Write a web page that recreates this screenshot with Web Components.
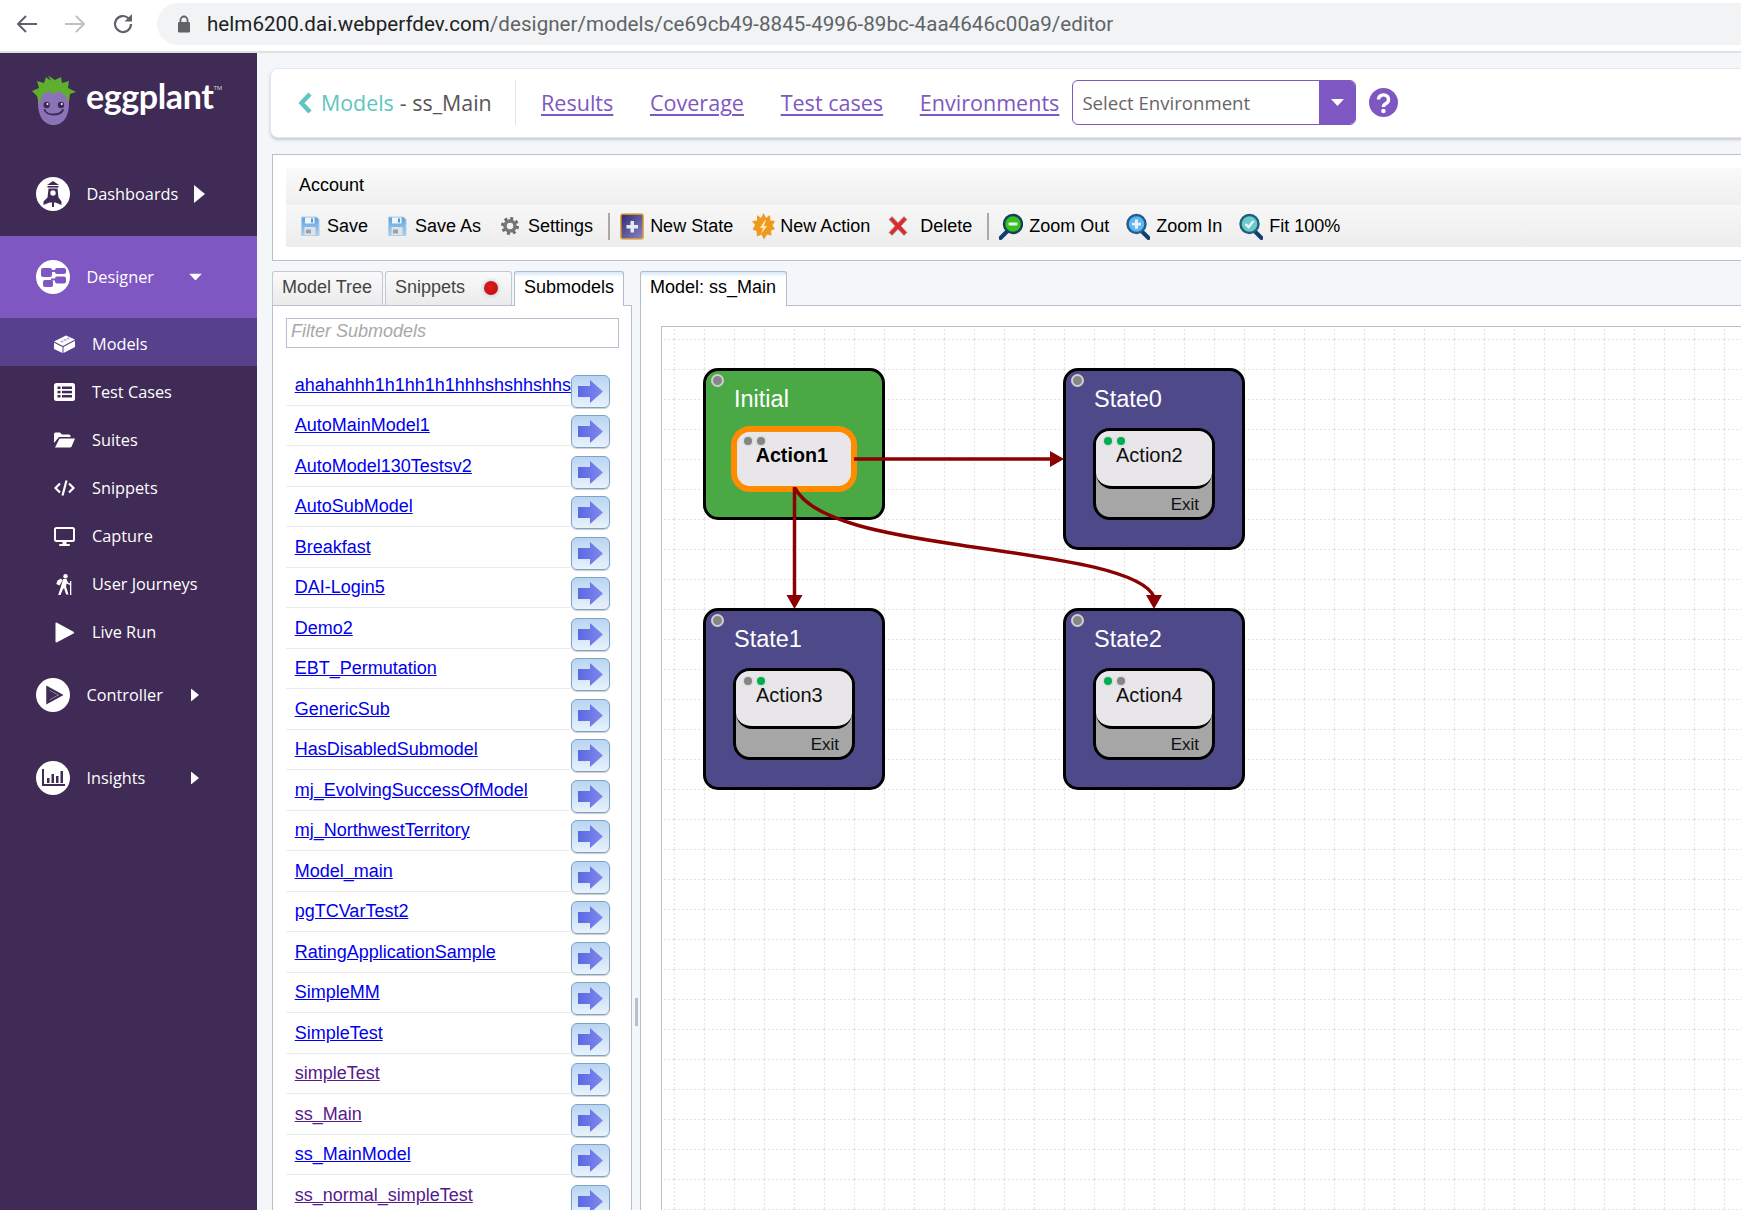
<!DOCTYPE html>
<html>
<head>
<meta charset="utf-8">
<title>eggplant designer</title>
<style>
html, body { margin: 0; padding: 0; background: #f3f7fa; overflow: hidden; }
</style>
</head>
<body>
<app-shell>
  <browser-bar slot="bar" url="helm6200.dai.webperfdev.com" path="/designer/models/ce69cb49-8845-4996-89bc-4aa4646c00a9/editor"></browser-bar>
  <side-nav slot="nav">
    <nav-item icon="dashboards" caret="big">Dashboards</nav-item>
    <nav-item icon="designer" caret="down" active>Designer</nav-item>
    <nav-item icon="models" sub active>Models</nav-item>
    <nav-item icon="testcases" sub>Test Cases</nav-item>
    <nav-item icon="suites" sub>Suites</nav-item>
    <nav-item icon="snippets" sub>Snippets</nav-item>
    <nav-item icon="capture" sub>Capture</nav-item>
    <nav-item icon="journeys" sub>User Journeys</nav-item>
    <nav-item icon="liverun" sub>Live Run</nav-item>
    <nav-item icon="controller" caret="right">Controller</nav-item>
    <nav-item icon="insights" caret="right">Insights</nav-item>
  </side-nav>
  <top-card></top-card>
  <tool-panel title-text="Account">
    <tool-btn icon="save" style="--gap:7px;--after:19px;--w:20px">Save</tool-btn>
    <tool-btn icon="save" style="--gap:8px;--after:20px;--w:20px">Save As</tool-btn>
    <tool-btn icon="gear" style="--gap:9px;--after:15px;--w:18px">Settings</tool-btn>
    <tool-sep style="--after:10px"></tool-sep>
    <tool-btn icon="newstate" style="--gap:6px;--after:19px;--w:24px">New State</tool-btn>
    <tool-btn icon="newaction" style="--gap:5px;--after:16px;--w:23px">New Action</tool-btn>
    <tool-btn icon="delete" style="--gap:10px;--after:15px;--w:24px">Delete</tool-btn>
    <tool-sep style="--after:10px"></tool-sep>
    <tool-btn icon="zoomout" style="--gap:6px;--after:17px;--w:24px">Zoom Out</tool-btn>
    <tool-btn icon="zoomin" style="--gap:6px;--after:17px;--w:24px">Zoom In</tool-btn>
    <tool-btn icon="fit" style="--gap:6px;--after:0;--w:24px">Fit 100%</tool-btn>
  </tool-panel>
  <editor-panes>
    <tab-item slot="lefttabs" style="width:111px">Model Tree</tab-item>
    <tab-item slot="lefttabs" style="width:127px" dot>Snippets</tab-item>
    <tab-item slot="lefttabs" style="width:110px" active>Submodels</tab-item>
    <tab-item slot="righttabs" style="width:147px" active>Model: ss_Main</tab-item>
    <sub-list slot="left"></sub-list>
    <model-canvas slot="right">
      <model-state style="left:41px;top:41px" label="Initial" kind="initial" action="Action1" dots="off off" selected></model-state>
      <model-state style="left:401px;top:41px" label="State0" action="Action2" dots="on on" exit="Exit"></model-state>
      <model-state style="left:41px;top:281px" label="State1" action="Action3" dots="off on" exit="Exit"></model-state>
      <model-state style="left:401px;top:281px" label="State2" action="Action4" dots="on off" exit="Exit"></model-state>
    </model-canvas>
  </editor-panes>
</app-shell>

<script>
var DARK = "#402b57";
var PURPLE = "#7e57c2";

var navIcons = {
  dashboards: `<svg width="34" height="34" viewBox="0 0 34 34"><circle cx="17" cy="17" r="17" fill="#fff"/>
    <path d="M17 4l6 4H11z" fill="${DARK}"/><rect x="11.5" y="9" width="11" height="1.6" fill="${DARK}"/>
    <path d="M12.5 11.5h9l1 9 3 4v3.5l-6-2.5h-6L7.500 28v-3.500l4-4z" fill="${DARK}"/>
    <circle cx="17" cy="16" r="2.700" fill="#fff"/><rect x="16" y="23" width="2" height="7" fill="${DARK}"/></svg>`,
  designer: `<svg width="34" height="34" viewBox="0 0 34 34"><circle cx="17" cy="17" r="17" fill="#fff"/>
    <g fill="${PURPLE}"><rect x="5" y="8" width="11" height="9" rx="2"/><rect x="19" y="8" width="11" height="6" rx="2"/>
    <rect x="19" y="16.500" width="11" height="7" rx="2"/><rect x="7" y="20" width="10" height="7" rx="2"/>
    <rect x="15" y="10" width="5" height="2"/><rect x="15" y="18.500" width="5" height="2"/></g></svg>`,
  models: `<svg width="21" height="18" viewBox="0 0 21 18"><g fill="#fff"><path d="M0 6.500 12 .5l9 4L9 11z"/><path d="M0 7.800l8.500 4.200V18L0 14z"/><path d="M9.500 12 21 5.800V12L9.500 18z"/></g>
    <g fill="#b9afc9"><ellipse cx="8" cy="6.500" rx="1.600" ry="1"/><ellipse cx="11" cy="5" rx="1.600" ry="1"/><ellipse cx="14" cy="3.600" rx="1.600" ry="1"/></g></svg>`,
  testcases: `<svg width="21" height="18" viewBox="0 0 21 18"><rect width="21" height="18" rx="2.500" fill="#fff"/>
    <g fill="${DARK}"><rect x="3.500" y="3.500" width="3" height="2.500"/><rect x="8" y="3.500" width="10" height="2.500"/><rect x="3.500" y="7.800" width="3" height="2.500"/><rect x="8" y="7.800" width="10" height="2.500"/><rect x="3.500" y="12" width="3" height="2.500"/><rect x="8" y="12" width="10" height="2.500"/></g></svg>`,
  suites: `<svg width="21" height="16" viewBox="0 0 21 16"><path d="M0 2a1.500 1.500 0 0 1 1.500-1.500h4.500l2 2h7a1.500 1.500 0 0 1 1.500 1.500v1H5L0 11z" fill="#fff"/><path d="M5.500 6.500H21l-3.500 8.300a1.500 1.500 0 0 1-1.300.7H1z" fill="#fff"/></svg>`,
  snippets: `<svg width="21" height="16" viewBox="0 0 21 16" fill="none" stroke="#fff" stroke-width="2.200"><path d="M6 3.500 1.500 8 6 12.500M15 3.500 19.500 8 15 12.500"/><path d="M12.500 .5 8.500 15.500"/></svg>`,
  capture: `<svg width="21" height="19" viewBox="0 0 21 19"><rect x="1" y="1" width="19" height="13" rx="1.500" fill="none" stroke="#fff" stroke-width="2"/><rect x="8.500" y="14" width="4" height="3" fill="#fff"/><rect x="5" y="17" width="11" height="2" rx="1" fill="#fff"/></svg>`,
  journeys: `<svg width="21" height="21" viewBox="0 0 21 21"><g fill="#fff"><circle cx="11.500" cy="2.200" r="2.200"/>
    <path d="M3.500 6.500 7 4.500l1.500 2-3 5-3.200-1.500z"/><path d="M9 5h3.500l1.500 3.500 2.500 1.200-.6 1.300-3.400-1.400-.5 3 2.500 8h-2.400L10 14l-1.500 2-2 5H4.200l2.400-7.200z"/><rect x="16" y="7" width="1.300" height="14"/></g></svg>`,
  liverun: `<svg width="21" height="21" viewBox="0 0 21 21"><path d="M1.500 1.500a1 1 0 0 1 1.500-.8L19.500 9.700a1 1 0 0 1 0 1.700L3 20.300a1 1 0 0 1-1.500-.8z" fill="#fff"/></svg>`,
  controller: `<svg width="34" height="34" viewBox="0 0 34 34"><circle cx="17" cy="17" r="17" fill="#fff"/><path d="M11.500 9.500 25 17l-13.500 7.500z" fill="none" stroke="${DARK}" stroke-width="2.500"/><path d="M11 9v16l2.500-1.500V10.500z" fill="${DARK}"/><path d="M13 12v10l9-5z" fill="${DARK}"/></svg>`,
  insights: `<svg width="34" height="34" viewBox="0 0 34 34"><circle cx="17" cy="17" r="17" fill="#fff"/><g fill="${DARK}"><path d="M6 8h2v15h21v2H6z"/><rect x="11" y="17" width="2.500" height="5"/><rect x="15.500" y="13" width="2.500" height="9"/><rect x="20" y="15" width="2.500" height="7"/><rect x="24.500" y="10" width="2.500" height="12"/></g></svg>`
};

var toolIcons = {
  save: `<svg width="20" height="24" viewBox="0 0 20 24"><defs><linearGradient id="f" x1="0" x2="0" y1="0" y2="1"><stop offset="0" stop-color="#5aa3e2"/><stop offset="1" stop-color="#a8cfee"/></linearGradient></defs>
    <path d="M1.500 3h15l2.500 2.500V21.500H1.500z" fill="url(#f)" stroke="#b6cfe4"/><rect x="5" y="3.500" width="9.500" height="6" fill="#eef5fb"/><rect x="11" y="4.500" width="2" height="4" fill="#5a94c8"/><rect x="4.500" y="13" width="11" height="8" fill="#dfe3e8"/><rect x="6" y="15.500" width="5" height="4" fill="#9aa3ad"/></svg>`,
  gear: `<svg width="18" height="24" viewBox="0 0 18 24"><g transform="translate(9 12)" fill="none"><circle r="5" stroke="#777" stroke-width="3.600"/><circle r="7.500" stroke="#6e6e6e" stroke-width="3" stroke-dasharray="3 2.890"/></g></svg>`,
  newstate: `<svg width="24" height="27" viewBox="0 0 24 27"><defs><linearGradient id="p" x1="0" x2="1" y1="0" y2="1"><stop offset="0" stop-color="#2f2a72"/><stop offset="1" stop-color="#8a87c4"/></linearGradient></defs>
    <rect x=".8" y="1" width="22.400" height="25" rx="2" fill="url(#p)" stroke="#eba83a" stroke-width="1.500"/><path d="M10.500 8h3.500v4h4v3.500h-4v4h-3.500v-4h-4V12h4z" fill="#e9e9f5"/></svg>`,
  newaction: `<svg width="23" height="27" viewBox="0 0 23 27"><path d="M11.500 0l2.500 5 4-3 .5 5.500 4.500.5-2.500 4.500 2.500 3.500-4 1.500.5 5-4.500-1-3 5-2.500-5-4.500 2-.5-5.500-4-1.500 2.500-4.500L0 8l5-.5L5 2l4 3z" fill="#ee9a1e"/><path d="M13 7l-5 8h3l-2 6 6-8h-3l2-6z" fill="#ffe9b0"/></svg>`,
  delete: `<svg width="24" height="24" viewBox="0 0 24 24"><path d="M3 5.500 6 2.500l6 6.200 6-6.200 3 3-6 6.500 6 6.500-3 3-6-6.200-6 6.200-3-3 6-6.500z" fill="#dd2a2a" stroke="#a9a9a9" stroke-width=".8"/></svg>`,
  zoomout: `<svg width="24" height="27" viewBox="0 0 24 27"><path d="M7.500 19 1.500 25" stroke="#123f6d" stroke-width="4" stroke-linecap="round"/><circle cx="14" cy="11" r="9" fill="#35c21a" stroke="#143f5f" stroke-width="2.400"/><rect x="9.500" y="9.500" width="9" height="3" rx="1" fill="#eef"/></svg>`,
  zoomin: `<svg width="24" height="27" viewBox="0 0 24 27"><path d="M16.500 19 22.500 25" stroke="#123f6d" stroke-width="4" stroke-linecap="round"/><circle cx="10.500" cy="11" r="9" fill="#62b5ec" stroke="#1d5f91" stroke-width="2.400"/><path d="M9 6.500h3V9.800h3v2.700h-3v3.300H9v-3.300H6V9.800h3z" fill="#e6f2fb"/></svg>`,
  fit: `<svg width="24" height="27" viewBox="0 0 24 27"><path d="M16.500 19 22.500 25" stroke="#123f6d" stroke-width="4" stroke-linecap="round"/><circle cx="10.500" cy="11" r="9" fill="#6ccbc8" stroke="#1d5f7f" stroke-width="2.400"/><path d="M6.500 11l3 3 5-6" fill="none" stroke="#eef8f8" stroke-width="2.200"/></svg>`
};

class AppShell extends HTMLElement {
  constructor() {
    super();
    this.attachShadow({ mode: "open" });
    this.shadowRoot.innerHTML = `
    <style>
      :host { display: grid; grid-template-columns: 257px 1fr; grid-template-rows: 53px 1157px; width: 1741px; height: 1210px; overflow: hidden; background: #f3f7fa; }
      ::slotted([slot=bar]) { grid-column: 1 / 3; }
      main { min-width: 0; overflow: hidden; padding: 15px 0 0 13px; display: flex; flex-direction: column; }
    </style>
    <slot name="bar"></slot>
    <slot name="nav"></slot>
    <main><slot></slot></main>`;
  }
}
customElements.define("app-shell", AppShell);

class BrowserBar extends HTMLElement {
  constructor() {
    super();
    this.attachShadow({ mode: "open" });
  }
  connectedCallback() {
    this.shadowRoot.innerHTML = `
    <style>
      :host { display: flex; align-items: flex-start; height: 53px; box-sizing: border-box; background: #fff; border-bottom: 2px solid #dfe1e3; font-family: Roboto, "Liberation Sans", sans-serif; }
      .nav { display: flex; align-items: center; height: 48px; padding-left: 15px; gap: 24px; }
      .nav svg { display: block; }
      .pill { margin: 3px -40px 0 21.500px; flex: 1; height: 42px; border-radius: 21px; background: #f1f3f4; display: flex; align-items: center; padding-left: 20px; }
      .url { margin-left: 16.500px; font-size: 20.550px; letter-spacing: .05px; color: #202124; white-space: nowrap; }
      .url span { color: #5f6368; }
    </style>
    <div class="nav">
      <svg width="24" height="24" viewBox="0 0 24 24" fill="none" stroke="#5f6368" stroke-width="2"><path d="M22 12H3M11 4l-8 8 8 8"/></svg>
      <svg width="24" height="24" viewBox="0 0 24 24" fill="none" stroke="#bdc1c6" stroke-width="2"><path d="M2 12h19M13 4l8 8-8 8"/></svg>
      <svg width="24" height="24" viewBox="0 0 24 24" fill="none" stroke="#5f6368" stroke-width="2.200"><path d="M20 12a8 8 0 1 1-2.500-5.800"/><path d="M21 2v7.500h-7.500z" fill="#5f6368" stroke="none"/></svg>
    </div>
    <div class="pill">
      <svg width="14" height="18" viewBox="0 0 14 18"><path d="M3.500 8V5a3.500 3.500 0 0 1 7 0v3" fill="none" stroke="#5f6368" stroke-width="1.800"/><rect x="1" y="7" width="12" height="10.500" rx="1.200" fill="#5f6368"/></svg>
      <div class="url">${this.getAttribute("url")}<span>${this.getAttribute("path")}</span></div>
    </div>`;
  }
}
customElements.define("browser-bar", BrowserBar);

var sideTemplate = document.createElement("template");
sideTemplate.innerHTML = `
<style>
  :host { display: block; background: ${DARK}; font-family: "Open Sans", sans-serif; overflow: hidden; }
  .logo { height: 100px; display: flex; align-items: flex-start; padding: 22px 0 0 31px; box-sizing: border-box; color: #fff; }
  .word { font: 700 34px/42px Lato, sans-serif; letter-spacing: -.4px; margin: 0 0 0 9px; }
  .tm { font: 6px/8px "Open Sans", sans-serif; margin-top: 9px; color: #ddd; }
</style>
<div class="logo">
  <svg width="46" height="50" viewBox="0 0 46 50">
    <path d="M22.500 14C33 14 38 20 38 28 38 40 33 50 22.500 50 12 50 7 40 7 28 7 20 12 14 22.500 14z" fill="#8c73b8"/>
    <path d="M1 16 8 13 6 6 13 8 15 2 20 6 17 .5 24 5 30 2 31 8 38 6 37 13 45 17 39 19 38 27 34 20 28 16 22 19 17 16 11 20 8 29 6 21z" fill="#5fae2e"/>
    <circle cx="15.700" cy="30" r="3.200" fill="#3a2a56"/><circle cx="30" cy="30" r="3.200" fill="#3a2a56"/><circle cx="16.500" cy="29" r="1" fill="#fff"/><circle cx="30.800" cy="29" r="1" fill="#fff"/>
    <path d="M13.500 35C16 41 29 41 32 35" fill="none" stroke="#3a2a56" stroke-width="1.800" stroke-linecap="round"/>
  </svg>
  <div class="word">eggplant</div><div class="tm">TM</div>
</div>
<slot></slot>`;
class SideNav extends HTMLElement {
  constructor() {
    super();
    this.attachShadow({ mode: "open" });
    this.shadowRoot.appendChild(sideTemplate.content.cloneNode(true));
  }
}
customElements.define("side-nav", SideNav);

class NavItem extends HTMLElement {
  constructor() {
    super();
    this.attachShadow({ mode: "open" });
  }
  connectedCallback() {
    var caret = this.getAttribute("caret");
    var c = "";
    if (caret == "big") c = `<svg class="caret" style="left:194px" width="11" height="18" viewBox="0 0 11 18"><path d="M0 0l11 9-11 9z" fill="#fff"/></svg>`;
    if (caret == "right") c = `<svg class="caret" style="left:191px" width="8" height="13" viewBox="0 0 8 13"><path d="M0 0l8 6.500L0 13z" fill="#fff"/></svg>`;
    if (caret == "down") c = `<svg class="caret" style="left:189px" width="13" height="7" viewBox="0 0 13 7"><path d="M0 0h13L6.500 7z" fill="#fff"/></svg>`;
    this.shadowRoot.innerHTML = `
    <style>
      :host { display: block; color: #fff; font-size: 16.300px; }
      .row { position: relative; display: flex; align-items: center; box-sizing: border-box; height: 83px; padding: 0 0 2px 36px; }
      .ic { width: 50.500px; flex: none; display: flex; }
      .ic svg { display: block; }
      .caret { position: absolute; top: calc(50% - 1px); transform: translateY(-50%); }
      :host([active]) .row { background: ${PURPLE}; height: 82px; padding-bottom: 0; }
      :host([active]) .caret { top: 50%; }
      :host([sub]) .row { height: 48px; padding: 4px 0 0 54px; background: none; }
      :host([sub]) .ic { width: 38px; }
      :host([sub][active]) .row { background: #57418c; height: 48px; }
    </style>
    <div class="row"><span class="ic">${navIcons[this.getAttribute("icon")]}</span><slot></slot>${c}</div>`;
  }
}
customElements.define("nav-item", NavItem);

var topTemplate = document.createElement("template");
topTemplate.innerHTML = `
<style>
  :host { display: flex; align-items: center; flex: none; height: 70px; width: calc(100% + 20px); box-sizing: border-box; background: #fff; border: 1px solid #e4e8ec; border-radius: 8px; box-shadow: 0 2px 3px rgba(0,0,0,.18); font: 21.400px "Open Sans", sans-serif; color: #555; padding: 0 0 1px 27px; }
  .crumb { display: flex; align-items: center; white-space: nowrap; width: 217px; }
  .crumb svg { margin-right: 9px; }
  .crumb b { font-weight: 400; color: #5fc5c0; margin-right: 6px; }
  .sep { width: 1px; height: 45px; background: #dfe3e6; flex: none; }
  .links { display: flex; gap: 36.700px; margin-left: 25px; font-size: 21.550px; }
  a { color: ${PURPLE}; text-decoration: underline; text-decoration-thickness: 2px; text-underline-offset: 3px; }
  .select { margin-left: 13px; width: 284px; height: 45px; box-sizing: border-box; border: 1.500px solid ${PURPLE}; border-radius: 6px; display: flex; align-items: center; justify-content: space-between; font-size: 18.600px; color: #666; padding-left: 9px; overflow: hidden; }
  .drop { width: 36px; height: 45px; background: ${PURPLE}; display: flex; align-items: center; justify-content: center; }
  .help { margin-left: 13px; }
</style>
<div class="crumb">
  <svg width="14" height="22" viewBox="0 0 14 22"><path d="M12 2 3.500 11 12 20" fill="none" stroke="#5fc5c0" stroke-width="4.500"/></svg>
  <b>Models</b>- ss_Main
</div>
<div class="sep"></div>
<div class="links"><a href="#">Results</a><a href="#">Coverage</a><a href="#">Test cases</a><a href="#">Environments</a></div>
<div class="select"><span>Select Environment</span><span class="drop"><svg width="13" height="7" viewBox="0 0 13 7"><path d="M0 0h13L6.500 7z" fill="#fff"/></svg></span></div>
<svg class="help" width="29" height="29" viewBox="0 0 29 29"><circle cx="14.500" cy="14.500" r="14.500" fill="${PURPLE}"/><path d="M9.500 11.500a5 4.600 0 1 1 7.500 4c-1.800 1-2.600 1.700-2.600 3.500" fill="none" stroke="#fff" stroke-width="3.400"/><circle cx="14.400" cy="23" r="2.200" fill="#fff"/></svg>`;
class TopCard extends HTMLElement {
  constructor() {
    super();
    this.attachShadow({ mode: "open" });
    this.shadowRoot.appendChild(topTemplate.content.cloneNode(true));
  }
}
customElements.define("top-card", TopCard);

class ToolPanel extends HTMLElement {
  constructor() {
    super();
    this.attachShadow({ mode: "open" });
  }
  connectedCallback() {
    this.shadowRoot.innerHTML = `
    <style>
      :host { display: block; flex: none; margin: 16px -20px 0 2px; height: 107px; box-sizing: border-box; border: 1px solid #b8bfce; background: #fff; padding: 13px 0 0 13px; font: 18px "Liberation Sans", sans-serif; color: #000; }
      .head { height: 37px; display: flex; align-items: center; padding: 0 0 2px 13px; box-sizing: border-box; background: linear-gradient(#fafafa, #efefef); }
      .bar { height: 42px; display: flex; align-items: center; padding-left: 14px; background: linear-gradient(#f7f7f7, #ededed); }
    </style>
    <div class="head">${this.getAttribute("title-text")}</div>
    <div class="bar"><slot></slot></div>`;
  }
}
customElements.define("tool-panel", ToolPanel);

class ToolBtn extends HTMLElement {
  constructor() {
    super();
    this.attachShadow({ mode: "open" });
  }
  connectedCallback() {
    this.shadowRoot.innerHTML = `
    <style>
      :host { display: flex; align-items: center; flex: none; margin-right: var(--after); white-space: nowrap; }
      .ic { width: var(--w); margin-right: var(--gap); display: flex; justify-content: center; }
      svg { display: block; }
    </style>
    <span class="ic">${toolIcons[this.getAttribute("icon")]}</span><slot></slot>`;
  }
}
customElements.define("tool-btn", ToolBtn);

class ToolSep extends HTMLElement {
  constructor() {
    super();
    this.attachShadow({ mode: "open" }).innerHTML = `
    <style>:host { display: block; flex: none; width: 2px; height: 27px; background: #a9a9a9; margin-right: var(--after); }</style>`;
  }
}
customElements.define("tool-sep", ToolSep);

class TabItem extends HTMLElement {
  constructor() {
    super();
    this.attachShadow({ mode: "open" });
  }
  connectedCallback() {
    var dot = this.hasAttribute("dot") ? `<i></i>` : "";
    this.shadowRoot.innerHTML = `
    <style>
      :host { display: flex; align-items: center; box-sizing: border-box; height: 34px; padding: 0 0 3px 9px; border: 1px solid #c2c8d4; border-bottom: 0; border-radius: 3px 3px 0 0; background: linear-gradient(#fafafa, #ebebeb); font: 18px "Liberation Sans", sans-serif; color: #444; position: relative; white-space: nowrap; }
      :host([active]) { background: linear-gradient(#d7e8f8, #fff 5px); color: #000; border-color: #b0bccd; height: 35px; padding-bottom: 4px; margin-bottom: -1px; z-index: 1; }
      i { position: absolute; right: 13px; top: 9px; width: 14px; height: 14px; border-radius: 50%; background: radial-gradient(circle at 45% 40%, #dd1c1c, #b30f12); box-shadow: 0 0 4px rgba(0,0,0,.25); }
    </style>
    <slot></slot>${dot}`;
  }
}
customElements.define("tab-item", TabItem);

class EditorPanes extends HTMLElement {
  constructor() {
    super();
    this.attachShadow({ mode: "open" });
    this.shadowRoot.innerHTML = `
    <style>
      :host { display: flex; flex: 1; min-height: 0; margin: 10px -20px -12px 2px; }
      .pane { display: flex; flex-direction: column; min-height: 0; }
      .left { width: 360px; flex: none; }
      .right { flex: 1; min-width: 0; }
      .tabs { display: flex; gap: 2px; flex: none; align-items: flex-start; height: 34px; }
      .body { flex: 1; min-height: 0; box-sizing: border-box; border: 1px solid #b8bfce; background: #fff; overflow: hidden; }
      .split { width: 8px; flex: none; position: relative; }
      .split::after { content: ""; position: absolute; left: 2.500px; top: 727px; width: 3px; height: 28px; background: #b8bfce; }
    </style>
    <div class="pane left"><div class="tabs"><slot name="lefttabs"></slot></div><div class="body"><slot name="left"></slot></div></div>
    <div class="split"></div>
    <div class="pane right"><div class="tabs"><slot name="righttabs"></slot></div><div class="body"><slot name="right"></slot></div></div>`;
  }
}
customElements.define("editor-panes", EditorPanes);

var subModels = [
  ["ahahahhh1h1hh1h1hhhshshhshhs"], ["AutoMainModel1"], ["AutoModel130Testsv2"], ["AutoSubModel"],
  ["Breakfast"], ["DAI-Login5"], ["Demo2"], ["EBT_Permutation"], ["GenericSub"], ["HasDisabledSubmodel"],
  ["mj_EvolvingSuccessOfModel"], ["mj_NorthwestTerritory"], ["Model_main"], ["pgTCVarTest2"],
  ["RatingApplicationSample"], ["SimpleMM"], ["SimpleTest"], ["simpleTest", true], ["ss_Main", true],
  ["ss_MainModel"], ["ss_normal_simpleTest", true]
];

class SubList extends HTMLElement {
  constructor() {
    super();
    this.attachShadow({ mode: "open" });
  }
  connectedCallback() {
    var rows = subModels.map(function (m) {
      return `<sub-row${m[1] ? " visited" : ""}>${m[0]}</sub-row>`;
    }).join("");
    this.shadowRoot.innerHTML = `
    <style>
      :host { display: block; padding: 12px 13px 0; font: 18px "Liberation Sans", sans-serif; }
      .filter { height: 30px; box-sizing: border-box; border: 1px solid #b8bfce; font-style: italic; color: #a8a8a8; padding-left: 4px; line-height: 24px; width: 333px; }
      .rows { margin-top: 17px; }
    </style>
    <div class="filter">Filter Submodels</div>
    <div class="rows">${rows}</div>`;
  }
}
customElements.define("sub-list", SubList);

class SubRow extends HTMLElement {
  constructor() {
    super();
    this.attachShadow({ mode: "open" });
    this.shadowRoot.innerHTML = `
    <style>
      :host { display: flex; align-items: flex-start; height: 40.500px; }
      .cell { width: 285px; height: 100%; box-sizing: border-box; flex: none; padding: 8.500px 0 0 8.700px; border-bottom: 1.500px solid #e9ebed; white-space: nowrap; line-height: 22px; }
      a { color: #0000ee; }
      :host([visited]) a { color: #551a8b; }
      .go { flex: none; display: block; width: 39px; height: 33px; box-sizing: border-box; margin-top: 9.700px; margin-bottom: -3px; border: 1px solid #7ea2c4; border-radius: 6px; background: linear-gradient(#b9d5f3, #e8f2fc); box-shadow: 0 1px 1px rgba(0,0,0,.2); position: relative; z-index: 1; }
      svg { display: block; }
    </style>
    <div class="cell"><a href="#"><slot></slot></a></div>
    <span class="go"><svg width="37" height="31" viewBox="0 0 37 31"><defs><linearGradient id="a" x1="0" x2="1"><stop offset="0" stop-color="#5a68e2"/><stop offset="1" stop-color="#8189ee"/></linearGradient></defs><path d="M6 10h12V4l13 11.500L18 27v-6H6z" fill="url(#a)"/></svg></span>`;
  }
}
customElements.define("sub-row", SubRow);

class ModelCanvas extends HTMLElement {
  constructor() {
    super();
    this.attachShadow({ mode: "open" });
    this.shadowRoot.innerHTML = `
    <style>
      :host { display: block; height: 100%; padding: 20px 0 0 20px; box-sizing: border-box; }
      .sheet { position: relative; height: 100%; box-sizing: border-box; border: 1px solid #b8bfce; border-right: 0; border-bottom: 0; background: #fff; overflow: hidden; }
      svg { position: absolute; left: 0; top: 0; width: 1200px; height: 900px; }
      .wires { z-index: 2; pointer-events: none; }
    </style>
    <div class="sheet">
      <svg>
        <defs><pattern id="grid" x="12" y="12" width="30" height="30" patternUnits="userSpaceOnUse">
          <path d="M0 .5H30M.5 0V30" stroke="#e4e4e4" stroke-width="1.200" stroke-dasharray="2 2" fill="none"/>
        </pattern></defs>
        <rect width="1200" height="900" fill="url(#grid)"/>
      </svg>
      <slot></slot>
      <svg class="wires">
        <g fill="none" stroke="#8b0000" stroke-width="3.500">
          <path d="M192 132H390"/>
          <path d="M132.500 160V270"/>
          <path d="M133 161C150 195 230 208 298 218C370 229 480 240 492 270"/>
        </g>
        <g fill="#8b0000">
          <path d="M402 132 388 124V140z"/>
          <path d="M132.500 282 124.500 268H140.500z"/>
          <path d="M492 282 484 268H500z"/>
        </g>
      </svg>
    </div>`;
  }
}
customElements.define("model-canvas", ModelCanvas);

class ModelState extends HTMLElement {
  constructor() {
    super();
    this.attachShadow({ mode: "open" });
  }
  connectedCallback() {
    var exit = this.getAttribute("exit");
    var dots = this.getAttribute("dots").split(" ").map(function (d) {
      return `<i class="${d}"></i>`;
    }).join("");
    this.shadowRoot.innerHTML = `
    <style>
      :host { position: absolute; display: block; width: 182px; height: 182px; box-sizing: border-box; border: 3px solid #000; border-radius: 15px; background: #4e4a8a; color: #fff; font-family: "Liberation Sans", sans-serif; padding: 14px 0 0 28px; }
      :host([kind=initial]) { background: #4aa845; height: 152px; }
      .pin { position: absolute; left: 4.500px; top: 3px; width: 13px; height: 13px; box-sizing: border-box; border-radius: 50%; background: #868686; border: 2px solid #cfcfcf; }
      .title { font-size: 23.500px; line-height: 28px; }
      .box { margin: 15px 0 0 -1px; width: 122px; box-sizing: border-box; border: 3px solid #000; border-radius: 17px; background: #a6a6a6; color: #111; overflow: hidden; }
      .top { position: relative; height: 58px; box-sizing: border-box; background: #e8e6e8; border-radius: 0 0 16px 16px; border-bottom: 3px solid #000; padding: 12px 0 0 20px; font-size: 20px; line-height: 24px; }
      .dots { position: absolute; left: 8px; top: 6px; display: flex; gap: 5px; }
      .dots i { width: 8px; height: 8px; border-radius: 50%; background: #858585; box-shadow: 0 0 0 1.500px #dcdcdc; }
      .dots i.on { background: #00b050; }
      .exit { height: 28px; line-height: 31px; font-size: 17px; text-align: right; padding-right: 13px; }
      :host([selected]) .box { margin: 13px 0 0 -3px; width: 126px; border: 6px solid #ff8c00; border-radius: 19px; background: #e8e6e8; }
      :host([selected]) .top { height: 54px; border-bottom: 0; padding: 10.500px 0 0 18.700px; font-size: 19.700px; font-weight: bold; color: #000; }
      :host([selected]) .dots { left: 7px; top: 5px; }
    </style>
    <span class="pin"></span>
    <div class="title">${this.getAttribute("label")}</div>
    <div class="box">
      <div class="top"><div class="dots">${dots}</div>${this.getAttribute("action")}</div>
      ${exit ? `<div class="exit">${exit}</div>` : ""}
    </div>`;
  }
}
customElements.define("model-state", ModelState);
</script>
</body>
</html>
